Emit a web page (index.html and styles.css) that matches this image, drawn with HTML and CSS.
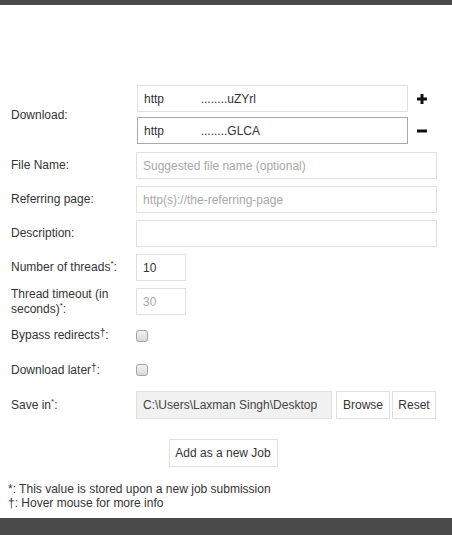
FILE: index.html
```html
<!DOCTYPE html>
<html>
<head>
<meta charset="utf-8">
<link rel="stylesheet" href="styles.css">
</head>
<body>
<div class="topbar"></div>
<main class="page">
  <div class="form">
    <div class="label">Download:</div>
    <div class="download-list">
      <div class="download-row">
        <input class="field url" type="text" value="http           ........uZYrl">
        <span class="icon-cell">
          <svg width="10" height="10" viewBox="0 0 10 10"><path d="M0 3.5h10v3H0zM3.5 0h3v10h-3z" fill="#111"/></svg>
        </span>
      </div>
      <div class="download-row">
        <input class="field url focused" type="text" value="http           ........GLCA">
        <span class="icon-cell">
          <svg width="10" height="10" viewBox="0 0 10 10"><path d="M0 3.5h10v3H0z" fill="#111"/></svg>
        </span>
      </div>
    </div>

    <div class="label">File Name:</div>
    <div class="cell"><input class="field wide" type="text" placeholder="Suggested file name (optional)"></div>

    <div class="label">Referring page:</div>
    <div class="cell"><input class="field wide" type="text" placeholder="http(s)://the-referring-page"></div>

    <div class="label">Description:</div>
    <div class="cell"><input class="field wide" type="text"></div>

    <div class="label">Number of threads<sup>*</sup>:</div>
    <div class="cell"><input class="field small" type="text" value="10"></div>

    <div class="label two-line">Thread timeout (in seconds)<sup>*</sup>:</div>
    <div class="cell"><input class="field small muted" type="text" value="30"></div>

    <div class="label">Bypass redirects<sup class="dag">†</sup>:</div>
    <div class="cell"><input class="check" type="checkbox"></div>

    <div class="label">Download later<sup class="dag">†</sup>:</div>
    <div class="cell"><input class="check" type="checkbox"></div>

    <div class="label">Save in<sup>*</sup>:</div>
    <div class="cell save-cell">
      <input class="field path" type="text" value="C:\Users\Laxman Singh\Desktop" readonly>
      <button class="btn browse">Browse</button>
      <button class="btn reset">Reset</button>
    </div>
  </div>

  <div class="actions">
    <button class="btn add">Add as a new Job</button>
  </div>

  <div class="notes">
    <div>*: This value is stored upon a new job submission</div>
    <div>†: Hover mouse for more info</div>
  </div>
</main>
<div class="bottombar"></div>
</body>
</html>
```

FILE: styles.css
```css
html, body {
  margin: 0;
  padding: 0;
  background: #fff;
}

body {
  font-family: "Liberation Sans", Arial, sans-serif;
  font-size: 12px;
  color: #333;
  width: 452px;
  height: 535px;
  overflow: hidden;
}

.topbar {
  height: 5px;
  background: #4a4a4a;
}

.page {
  padding: 80px 0 0 8px;
  height: 433px;
}

.form {
  display: grid;
  grid-template-columns: 128px 301px;
  grid-template-rows: 60px 27px 27px 27px 27px 27px 27px 28px 28px;
  row-gap: 7px;
  align-items: center;
}

.label {
  padding-left: 3px;
  line-height: 15px;
}

.label sup {
  font-size: 8px;
  line-height: 0;
  vertical-align: 5px;
}

.label sup.dag {
  font-size: 10px;
  vertical-align: 3px;
}

.two-line {
  padding-right: 12px;
}

.cell {
  display: flex;
  align-items: center;
  height: 27px;
}

.download-list {
  display: flex;
  flex-direction: column;
  gap: 5px;
  align-self: start;
}

.download-row {
  display: flex;
  align-items: center;
}

.icon-cell {
  width: 29px;
  display: flex;
  justify-content: flex-start;
  padding-left: 9px;
  box-sizing: border-box;
}

.icon-cell svg {
  display: block;
}

.field {
  box-sizing: border-box;
  height: 27px;
  border: 1px solid #e0e0e0;
  border-radius: 0;
  padding: 0 6px;
  font-family: "Liberation Sans", Arial, sans-serif;
  font-size: 12px;
  color: #333;
  background: #fff;
  outline: none;
  margin: 0;
}

.field::placeholder {
  color: #a8a8a8;
}

.url {
  width: 272px;
  margin-left: 1px;
}

.focused {
  border-color: #a9a9a9;
}

.wide {
  width: 301px;
}

.small {
  width: 50px;
}

.muted {
  color: #aaa;
}

.check {
  appearance: none;
  -webkit-appearance: none;
  width: 12px;
  height: 12px;
  margin: 0;
  border: 1px solid #a3a3a3;
  border-radius: 3px;
  background: linear-gradient(#f2f2f2, #dadada);
  box-sizing: border-box;
}

.save-cell {
  height: 28px;
}

.path {
  width: 196px;
  height: 28px;
  background: #f1f1f1;
  color: #444;
  padding: 0 6px;
}

.btn {
  box-sizing: border-box;
  height: 28px;
  background: #fff;
  border: 1px solid #e0e0e0;
  border-radius: 0;
  font-family: "Liberation Sans", Arial, sans-serif;
  font-size: 12px;
  color: #333;
  padding: 0;
  margin: 0;
}

.browse {
  width: 54px;
  margin-left: 4px;
}

.reset {
  width: 44px;
  margin-left: 2px;
}

.actions {
  width: 430px;
  display: flex;
  justify-content: center;
  margin-top: 20px;
}

.add {
  width: 109px;
}

.notes {
  margin-top: 15px;
  line-height: 14px;
}

.bottombar {
  height: 17px;
  background: #4a4a4a;
}
```
